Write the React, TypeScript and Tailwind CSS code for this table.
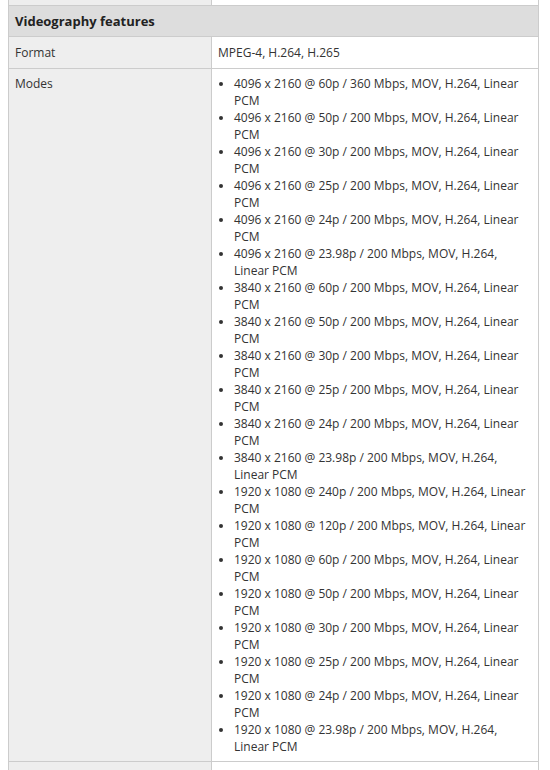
import React from "react";

const modes: string[] = [
  "4096 x 2160 @ 60p / 360 Mbps, MOV, H.264, Linear PCM",
  "4096 x 2160 @ 50p / 200 Mbps, MOV, H.264, Linear PCM",
  "4096 x 2160 @ 30p / 200 Mbps, MOV, H.264, Linear PCM",
  "4096 x 2160 @ 25p / 200 Mbps, MOV, H.264, Linear PCM",
  "4096 x 2160 @ 24p / 200 Mbps, MOV, H.264, Linear PCM",
  "4096 x 2160 @ 23.98p / 200 Mbps, MOV, H.264, Linear PCM",
  "3840 x 2160 @ 60p / 200 Mbps, MOV, H.264, Linear PCM",
  "3840 x 2160 @ 50p / 200 Mbps, MOV, H.264, Linear PCM",
  "3840 x 2160 @ 30p / 200 Mbps, MOV, H.264, Linear PCM",
  "3840 x 2160 @ 25p / 200 Mbps, MOV, H.264, Linear PCM",
  "3840 x 2160 @ 24p / 200 Mbps, MOV, H.264, Linear PCM",
  "3840 x 2160 @ 23.98p / 200 Mbps, MOV, H.264, Linear PCM",
  "1920 x 1080 @ 240p / 200 Mbps, MOV, H.264, Linear PCM",
  "1920 x 1080 @ 120p / 200 Mbps, MOV, H.264, Linear PCM",
  "1920 x 1080 @ 60p / 200 Mbps, MOV, H.264, Linear PCM",
  "1920 x 1080 @ 50p / 200 Mbps, MOV, H.264, Linear PCM",
  "1920 x 1080 @ 30p / 200 Mbps, MOV, H.264, Linear PCM",
  "1920 x 1080 @ 25p / 200 Mbps, MOV, H.264, Linear PCM",
  "1920 x 1080 @ 24p / 200 Mbps, MOV, H.264, Linear PCM",
  "1920 x 1080 @ 23.98p / 200 Mbps, MOV, H.264, Linear PCM"
];

export default function App() {
  return (
    <div className="w-[550px] h-[770px] overflow-hidden bg-white font-['Open_Sans',sans-serif] text-[12px] leading-[17px] text-[#333]">
      <table className="ml-2 -mt-[27px] w-[531px] border-collapse">
        <colgroup>
          <col className="w-[203px]" />
          <col />
        </colgroup>
        <tbody>
          {/* row above, cut off */}
          <tr>
            <td className="h-[32px] border border-[#ccc] bg-[#eee]" />
            <td className="border border-[#ccc]" />
          </tr>
          <tr>
            <th
              colSpan={2}
              className="h-[31px] border border-[#ccc] bg-[#ddd] px-[6px] text-left text-[13px] font-bold text-[#222]"
            >
              Videography features
            </th>
          </tr>
          <tr>
            <td className="h-[32px] border border-[#ccc] bg-[#eee] px-[6px] align-middle">
              Format
            </td>
            <td className="border border-[#ccc] px-[6px] align-middle">
              MPEG-4, H.264, H.265
            </td>
          </tr>
          <tr>
            <td className="border border-[#ccc] bg-[#eee] px-[6px] py-[6px] align-top">
              Modes
            </td>
            <td className="border border-[#ccc] px-[6px] py-[6px] align-top">
              <ul className="list-disc pl-4">
                {modes.map(m =>
                  <li key={m}>
                    {m}
                  </li>
                )}
              </ul>
            </td>
          </tr>
          {/* next row, cut off */}
          <tr>
            <td className="h-[32px] border border-[#ccc] bg-[#eee]" />
            <td className="border border-[#ccc]" />
          </tr>
        </tbody>
      </table>
    </div>
  );
}
